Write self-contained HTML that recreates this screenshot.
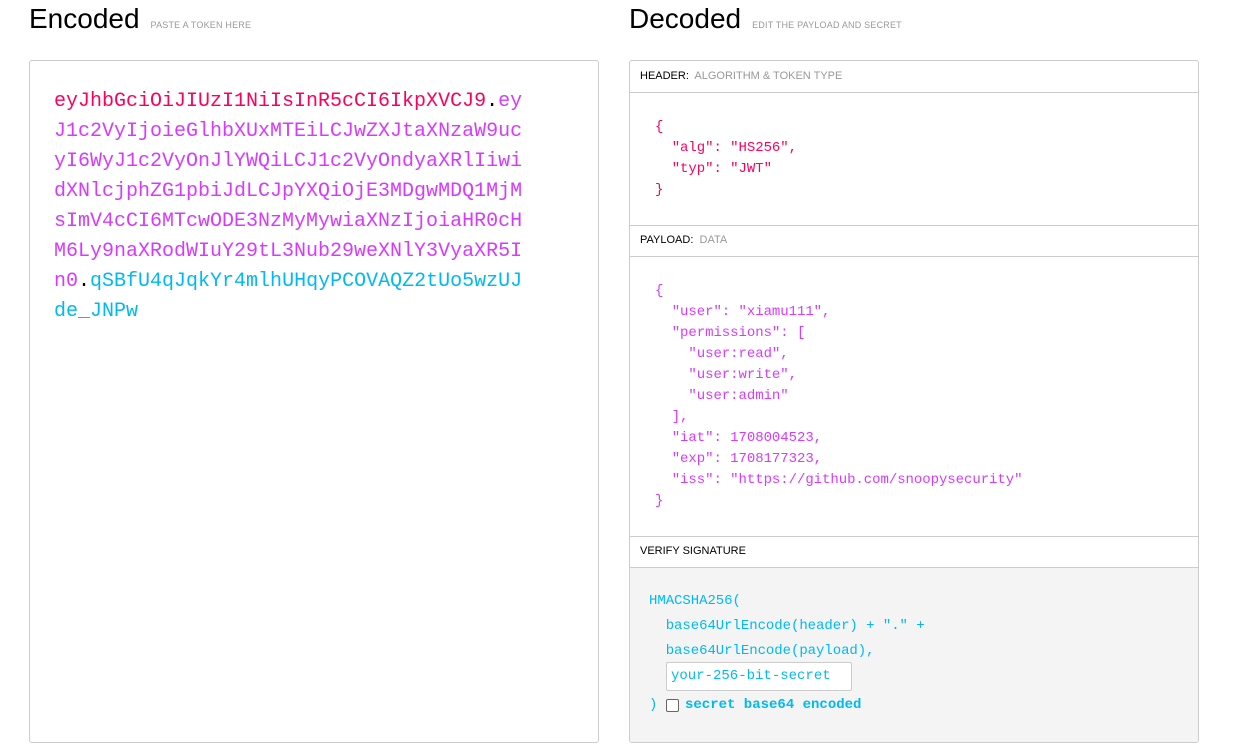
<!DOCTYPE html>
<html><head><meta charset="utf-8"><style>
body{margin:0;background:#fff;width:1249px;height:754px;overflow:hidden;font-family:"Liberation Sans",sans-serif;position:relative}
.h{position:absolute;top:3px;font-size:28px;color:#000}
.h small{font-size:9px;color:#999;margin-left:11px;letter-spacing:.2px}
.box{position:absolute;border:1px solid #ccc;border-radius:3px;box-sizing:border-box}
.mono{font-family:"Liberation Mono",monospace}
.tok{position:absolute;left:54px;top:87px;font-size:20px;line-height:30px;white-space:pre}
.r{color:#fb015b}.p{color:#d63aff}.b{color:#00b9f1}
.sec{position:absolute;left:0;right:0;border-bottom:1px solid #ccc;font-size:11px;color:#000;padding-left:10px;box-sizing:border-box;line-height:31px}
.sec span{color:#999}
.code{position:absolute;left:655px;font-size:14px;line-height:21px;white-space:pre;letter-spacing:-.05px}
</style></head><body>
<div class="h" style="left:29px">Encoded<small>PASTE A TOKEN HERE</small></div>
<div class="h" style="left:629px">Decoded<small>EDIT THE PAYLOAD AND SECRET</small></div>
<div class="box" style="left:29px;top:60px;width:570px;height:683px"></div>
<div class="tok mono"><span class="r">eyJhbGciOiJIUzI1NiIsInR5cCI6IkpXVCJ9</span>.<span class="p">ey
J1c2VyIjoieGlhbXUxMTEiLCJwZXJtaXNzaW9uc
yI6WyJ1c2VyOnJlYWQiLCJ1c2VyOndyaXRlIiwi
dXNlcjphZG1pbiJdLCJpYXQiOjE3MDgwMDQ1MjM
sImV4cCI6MTcwODE3NzMyMywiaXNzIjoiaHR0cH
M6Ly9naXRodWIuY29tL3Nub29weXNlY3VyaXR5I
n0</span>.<span class="b">qSBfU4qJqkYr4mlhUHqyPCOVAQZ2tUo5wzUJ
de_JNPw</span></div>
<div class="box" style="left:629px;top:60px;width:570px;height:683px;overflow:hidden">
<div class="sec" style="top:0;height:32px">HEADER:&nbsp; <span>ALGORITHM &amp; TOKEN TYPE</span></div>
<div class="sec" style="top:32px;height:133px"></div>
<div class="sec" style="top:164px;height:32px;border-bottom:1px solid #ccc">PAYLOAD:&nbsp; <span>DATA</span></div>
<div class="sec" style="top:196px;height:280px"></div>
<div class="sec" style="top:475px;height:32px">VERIFY SIGNATURE</div>
<div style="position:absolute;top:507px;left:0;right:0;bottom:0;background:#f4f4f4"></div>
</div>
<div class="code mono r" style="top:117px">{
  "alg": "HS256",
  "typ": "JWT"
}</div>
<div class="code mono p" style="top:281px">{
  "user": "xiamu111",
  "permissions": [
    "user:read",
    "user:write",
    "user:admin"
  ],
  "iat": 1708004523,
  "exp": 1708177323,
  "iss": "https://github.com/snoopysecurity"
}</div>
<div class="code mono b" style="top:589px;left:649px;line-height:25px">HMACSHA256(
  base64UrlEncode(header) + "." +
  base64UrlEncode(payload),</div>
<div class="mono b" style="position:absolute;left:666px;top:662px;width:186px;height:29px;border:1px solid #ccc;border-radius:2px;background:#fff;box-sizing:border-box;font-size:14px;line-height:27px;padding-left:4px">your-256-bit-secret</div>
<div class="mono b" style="position:absolute;left:649px;top:695px;font-size:14px;line-height:20px">)</div>
<div style="position:absolute;left:666px;top:699px;width:11px;height:11px;border:1px solid #666;border-radius:2px;background:#fff"></div>
<div class="mono b" style="position:absolute;left:685px;top:695px;font-size:14px;line-height:20px;font-weight:bold">secret base64 encoded</div>
</body></html>
